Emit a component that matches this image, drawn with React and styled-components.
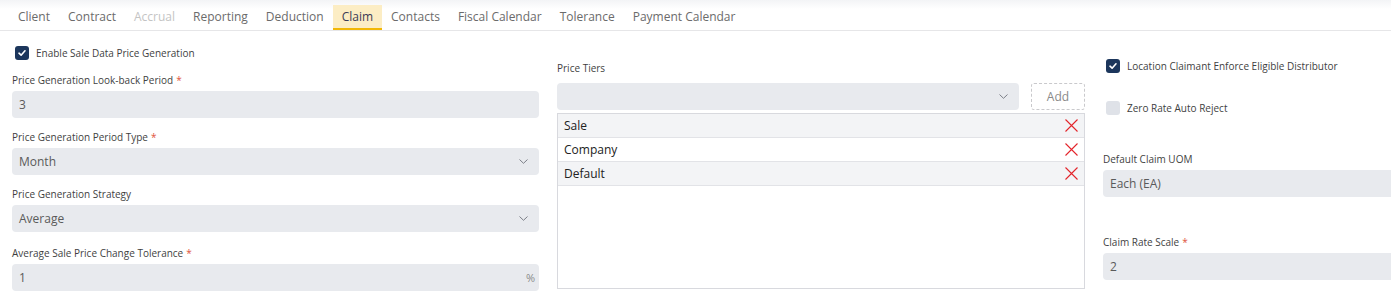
import React from "react";
import styled, { createGlobalStyle } from "styled-components";

const GlobalStyle = createGlobalStyle`
  html, body {
    margin: 0;
    padding: 0;
    background: #ffffff;
    overflow: hidden;
  }
  body {
    font-family: "Open Sans", "Liberation Sans", sans-serif;
    color: #333333;
  }
`;

const Page = styled.div`
  width: 1640px;
`;

const TabBar = styled.div`
  display: flex;
  align-items: flex-end;
  height: 31px;
  padding-left: 9px;
  box-sizing: border-box;
  border-bottom: 1px solid #e6e6e8;
  background: linear-gradient(#f3f4f6, #ffffff 30%);
`;

const Tab = styled.div`
  height: 25px;
  padding: 0 9px;
  box-sizing: border-box;
  font-size: 12px;
  line-height: 24px;
  color: ${(p) => (p.$disabled ? "#c4c4c4" : p.$active ? "#3b3b55" : "#6b6b6b")};
  background: ${(p) => (p.$active ? "#fcedc4" : "transparent")};
  border-bottom: 2px solid ${(p) => (p.$active ? "#f2b705" : "transparent")};
  white-space: nowrap;
`;

const Body = styled.div`
  display: grid;
  grid-template-columns: 527px 528px 528px;
  column-gap: 18px;
  padding-left: 12px;
  align-items: start;
`;

const Column = styled.div`
  display: flex;
  flex-direction: column;
  padding-top: ${(p) => p.$top}px;
`;

const CheckRow = styled.label`
  display: flex;
  align-items: center;
  gap: 7px;
  height: 14px;
  padding-left: ${(p) => p.$indent || 0}px;
  margin-top: ${(p) => p.$mt || 0}px;
  font-size: 10px;
  color: #3f3f3f;
`;

const Box = styled.span`
  width: 14px;
  height: 14px;
  border-radius: 3px;
  box-sizing: border-box;
  background: ${(p) => (p.$checked ? "#1c365c" : "#dfe2e8")};
  display: flex;
  align-items: center;
  justify-content: center;
  flex-shrink: 0;
`;

const Field = styled.div`
  display: flex;
  flex-direction: column;
  margin-top: ${(p) => p.$mt || 0}px;
`;

const Label = styled.div`
  font-size: 10px;
  line-height: 17px;
  color: #3f3f3f;
  margin-bottom: ${(p) => (p.$mb != null ? p.$mb : 2)}px;
  white-space: nowrap;
`;

const Req = styled.span`
  color: #e0533c;
  margin-left: 3px;
`;

const Input = styled.div`
  height: 27px;
  border-radius: 4px;
  background: #e8eaee;
  display: flex;
  align-items: center;
  justify-content: space-between;
  padding: 0 11px 0 7px;
  font-size: 12px;
  color: #5a5a5a;
  box-sizing: border-box;
  flex: ${(p) => (p.$grow ? 1 : "none")};
`;

const Suffix = styled.span`
  color: #8a8a8a;
  font-size: 11px;
  margin-right: -7px;
`;

const TierRow = styled.div`
  display: flex;
  gap: 12px;
  align-items: stretch;
`;

const AddButton = styled.div`
  width: 54px;
  height: 27px;
  box-sizing: border-box;
  border: 1px dashed #c9c9cc;
  border-radius: 3px;
  display: flex;
  align-items: center;
  justify-content: center;
  font-size: 12px;
  color: #8a8a8a;
`;

const List = styled.div`
  margin-top: 3px;
  height: 176px;
  box-sizing: border-box;
  border: 1px solid #d8d9de;
`;

const ListItem = styled.div`
  height: 24px;
  box-sizing: border-box;
  display: flex;
  align-items: center;
  justify-content: space-between;
  padding: 0 6px 0 6px;
  background: ${(p) => (p.$alt ? "#f3f4f6" : "#ffffff")};
  border-bottom: 1px solid #e2e3e7;
  font-size: 12px;
  color: #222222;
`;

const Check = () => (
  <svg width="10" height="10" viewBox="0 0 10 10">
    <path d="M2 5.2 L4.1 7.2 L8 2.8" fill="none" stroke="#ffffff" strokeWidth="1.6" strokeLinecap="round" strokeLinejoin="round" />
  </svg>
);

const Chevron = () => (
  <svg width="9" height="5" viewBox="0 0 9 5">
    <path d="M0.5 0.5 L4.5 4.3 L8.5 0.5" fill="none" stroke="#7c7f88" strokeWidth="1" />
  </svg>
);

const Cross = () => (
  <svg width="13" height="13" viewBox="0 0 13 13">
    <path d="M0.5 0.5 L12.5 12.5 M12.5 0.5 L0.5 12.5" stroke="#e3242b" strokeWidth="1.1" />
  </svg>
);

const tabs = ["Client", "Contract", "Accrual", "Reporting", "Deduction", "Claim", "Contacts", "Fiscal Calendar", "Tolerance", "Payment Calendar"];
const tiers = ["Sale", "Company", "Default"];

export default function App() {
  return (
    <Page>
      <GlobalStyle />
      <TabBar>
        {tabs.map((t) => (
          <Tab key={t} $active={t === "Claim"} $disabled={t === "Accrual"}>
            {t}
          </Tab>
        ))}
      </TabBar>
      <Body>
        <Column $top={15}>
          <CheckRow $indent={3}>
            <Box $checked><Check /></Box>
            Enable Sale Data Price Generation
          </CheckRow>
          <Field $mt={12}>
            <Label>Price Generation Look-back Period<Req>*</Req></Label>
            <Input>3</Input>
          </Field>
          <Field $mt={11}>
            <Label>Price Generation Period Type<Req>*</Req></Label>
            <Input>Month<Chevron /></Input>
          </Field>
          <Field $mt={11}>
            <Label>Price Generation Strategy</Label>
            <Input>Average<Chevron /></Input>
          </Field>
          <Field $mt={13}>
            <Label>Average Sale Price Change Tolerance<Req>*</Req></Label>
            <Input>1<Suffix>%</Suffix></Input>
          </Field>
        </Column>
        <Column $top={29}>
          <Field>
            <Label $mb={6}>Price Tiers</Label>
            <TierRow>
              <Input $grow><span /><Chevron /></Input>
              <AddButton>Add</AddButton>
            </TierRow>
            <List>
              {tiers.map((t, i) => (
                <ListItem key={t} $alt={i % 2 === 0}>
                  {t}
                  <Cross />
                </ListItem>
              ))}
            </List>
          </Field>
        </Column>
        <Column $top={28}>
          <CheckRow $indent={3}>
            <Box $checked><Check /></Box>
            Location Claimant Enforce Eligible Distributor
          </CheckRow>
          <CheckRow $indent={3} $mt={28}>
            <Box />
            Zero Rate Auto Reject
          </CheckRow>
          <Field $mt={36}>
            <Label>Default Claim UOM</Label>
            <Input>Each (EA)</Input>
          </Field>
          <Field $mt={37}>
            <Label>Claim Rate Scale<Req>*</Req></Label>
            <Input>2</Input>
          </Field>
        </Column>
      </Body>
    </Page>
  );
}
